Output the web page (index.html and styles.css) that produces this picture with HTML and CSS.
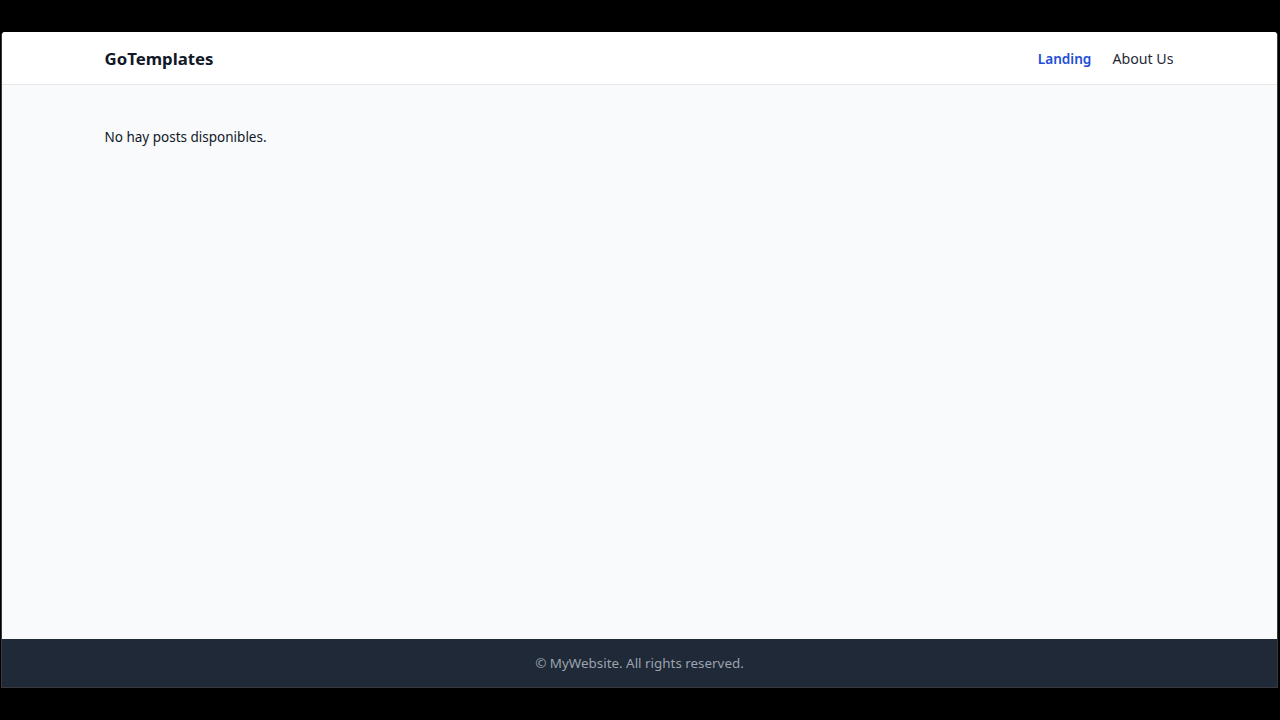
FILE: index.html
```html
<!DOCTYPE html>
<html lang="es">
<head>
<meta charset="utf-8">
<title>GoTemplates</title>
<link rel="stylesheet" href="styles.css">
</head>
<body>
<div class="window">
  <header class="site-header">
    <div class="container header-inner">
      <a class="brand" href="#">GoTemplates</a>
      <nav class="nav">
        <a class="nav-link active" href="#">Landing</a>
        <a class="nav-link" href="#">About Us</a>
      </nav>
    </div>
  </header>
  <main class="site-main">
    <div class="container">
      <p class="empty">No hay posts disponibles.</p>
    </div>
  </main>
  <footer class="site-footer">
    <p>© MyWebsite. All rights reserved.</p>
  </footer>
</div>
</body>
</html>
```

FILE: styles.css
```css
* { box-sizing: border-box; }
html, body { margin: 0; height: 100%; }
body {
  background: #000;
  font-family: "Noto Sans", "Open Sans", sans-serif;
  padding-top: 32px;
}
.window {
  margin-left: 1px;
  width: 1277px;
  height: 656px;
  display: flex;
  flex-direction: column;
  background: #f8fafc;
  border-left: 1px solid #3a3a3a;
  border-right: 1px solid #3a3a3a;
  border-bottom: 1px solid #3a3a3a;
  border-radius: 4px 4px 0 0;
  overflow: hidden;
}
.container {
  max-width: 1100px;
  margin: 0 auto;
  padding: 0 16px 0 15px;
  width: 100%;
}
.site-header {
  background: #fff;
  border-bottom: 1px solid #e5e7eb;
  height: 53px;
  flex: none;
}
.header-inner {
  height: 100%;
  display: flex;
  align-items: center;
  justify-content: space-between;
}
.brand {
  font-size: 16.8px;
  font-weight: 700;
  color: #111827;
  text-decoration: none;
}
.nav { display: flex; gap: 21px; }
.nav-link {
  font-size: 14.2px;
  color: #1f2937;
  text-decoration: none;
}
.nav-link.active { color: #1d4ed8; font-weight: 600; font-size: 13.6px; }
.site-main { flex: 1; padding-top: 42px; }
.empty {
  margin: 0;
  font-size: 13.5px;
  line-height: 20px;
  color: #111827;
}
.site-footer {
  flex: none;
  height: 48px;
  background: #1f2937;
  display: flex;
  align-items: center;
  justify-content: center;
}
.site-footer p {
  margin: 0;
  font-size: 13.4px;
  color: #9ca3af;
}
```
